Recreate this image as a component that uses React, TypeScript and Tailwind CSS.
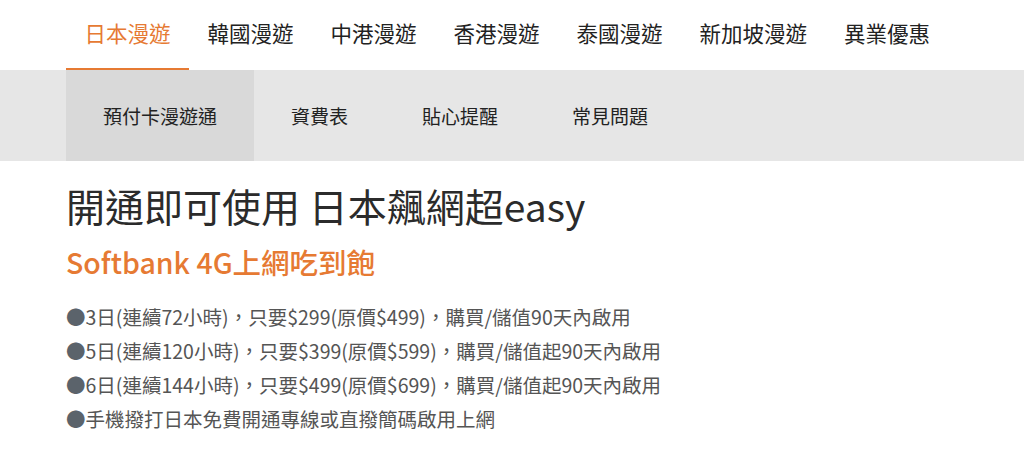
import { useState } from "react";

const mainTabs = ["日本漫遊", "韓國漫遊", "中港漫遊", "香港漫遊", "泰國漫遊", "新加坡漫遊", "異業優惠"];
const subTabs = ["預付卡漫遊通", "資費表", "貼心提醒", "常見問題"];

const plans = [
  "3日(連續72小時)，只要$299(原價$499)，購買/儲值90天內啟用",
  "5日(連續120小時)，只要$399(原價$599)，購買/儲值起90天內啟用",
  "6日(連續144小時)，只要$499(原價$699)，購買/儲值起90天內啟用",
  "手機撥打日本免費開通專線或直撥簡碼啟用上網",
];

export default function App() {
  const [tab, setTab] = useState(0);
  const [subTab, setSubTab] = useState(0);

  return (
    <main className="min-h-screen w-full bg-white font-['Noto_Sans_CJK_TC','Noto_Sans',sans-serif] text-[#333]">
      <nav className="flex h-[70px] items-stretch px-[66px]">
        {mainTabs.map((name, i) => (
          <button
            key={name}
            type="button"
            onClick={() => setTab(i)}
            className={`border-b-2 px-[18.5px] pb-[3px] text-[21.5px] leading-none ${
              tab === i ? "border-[#e67a33] text-[#e67a33]" : "border-transparent text-[#222]"
            }`}
          >
            {name}
          </button>
        ))}
      </nav>

      <div className="flex h-[91px] items-stretch bg-[#e6e6e6] px-[66px]">
        {subTabs.map((name, i) => (
          <button
            key={name}
            type="button"
            onClick={() => setSubTab(i)}
            className={`px-[37px] pb-[1px] text-[19px] leading-none text-[#222] ${subTab === i ? "bg-[#d9d9d9]" : ""}`}
          >
            {name}
          </button>
        ))}
      </div>

      <section className="px-[66px] pt-[18px]">
        <h1 className="text-[39px] leading-[52px] text-[#2b2b2b]">開通即可使用 日本飆網超easy</h1>
        <h2 className="mt-[13px] text-[28.5px] font-medium leading-[36px] text-[#e67a33]">Softbank 4G上網吃到飽</h2>
        <ul className="mt-[20px] text-[19.5px] leading-[34px] text-[#555]">
          {plans.map((plan) => (
            <li key={plan}>
              <span className="text-[#5b636b]">●</span>
              {plan}
            </li>
          ))}
        </ul>
      </section>
    </main>
  );
}
